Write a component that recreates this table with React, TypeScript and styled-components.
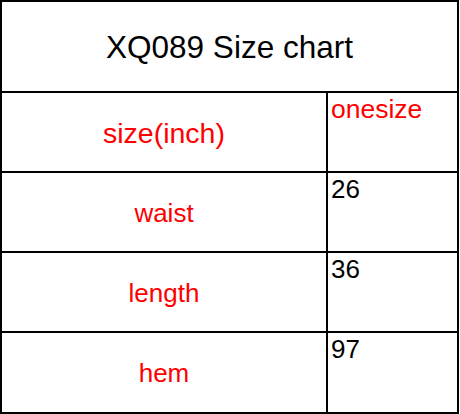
import React from 'react';
import styled, { createGlobalStyle } from 'styled-components';

const GlobalStyle = createGlobalStyle`
    html, body {
        margin: 0;
        padding: 0;
        background: #ffffff;
    }
`;

interface IRow {
    label: string;
    value: string;
    labelSize?: number;
    highlight?: boolean;
}

const rows: IRow[] = [
    { label: 'size(inch)', value: 'onesize', labelSize: 28.5, highlight: true },
    { label: 'waist', value: '26' },
    { label: 'length', value: '36' },
    { label: 'hem', value: '97' },
];

const Chart = styled.div`
    box-sizing: border-box;
    width: 459px;
    height: 414px;
    display: grid;
    grid-template-columns: 326px 131px;
    grid-template-rows: 91px 80px 80px 80px 81px;
    border-top: 2px solid #000;
    border-left: 2px solid #000;
    font-family: 'Liberation Sans', Arial, sans-serif;
    background: #fff;
`;

const Cell = styled.div`
    box-sizing: border-box;
    border-right: 2px solid #000;
    border-bottom: 2px solid #000;
    line-height: normal;
`;

const TitleCell = styled(Cell)`
    grid-column: 1 / span 2;
    display: flex;
    align-items: center;
    justify-content: center;
    padding-top: 2px;
    font-size: 31.5px;
    color: #000;
`;

const LabelCell = styled(Cell)<{ $size?: number }>`
    display: flex;
    align-items: center;
    justify-content: center;
    padding-top: 2px;
    font-size: ${props => props.$size ?? 26}px;
    color: #ff0000;
`;

const ValueCell = styled(Cell)<{ $highlight?: boolean }>`
    padding: 1px 3px;
    font-size: ${props => (props.$highlight ? 26.5 : 26)}px;
    color: ${props => (props.$highlight ? '#ff0000' : '#000')};
`;

const App: React.FunctionComponent = () => {
    return (
        <>
            <GlobalStyle />
            <Chart>
                <TitleCell>XQ089 Size chart</TitleCell>
                {rows.map(row => (
                    <React.Fragment key={row.label}>
                        <LabelCell $size={row.labelSize}>{row.label}</LabelCell>
                        <ValueCell $highlight={row.highlight}>
                            {row.value}
                        </ValueCell>
                    </React.Fragment>
                ))}
            </Chart>
        </>
    );
};

export default App;
